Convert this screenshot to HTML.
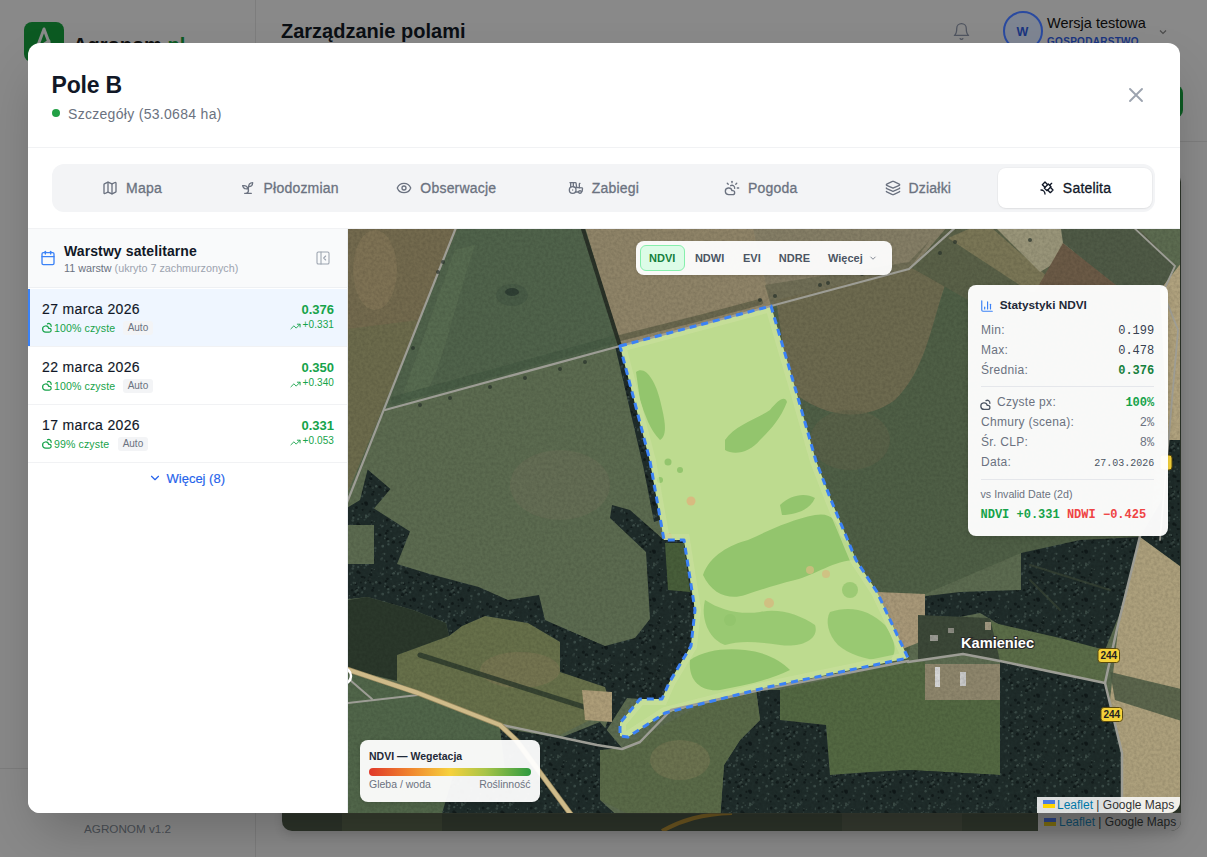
<!DOCTYPE html>
<html><head><meta charset="utf-8">
<style>
*{box-sizing:border-box;margin:0;padding:0;-webkit-font-smoothing:antialiased}
html,body{width:1207px;height:857px;overflow:hidden}
body{background:#898989;font-family:"Liberation Sans",sans-serif;position:relative}
.a{position:absolute;line-height:1;white-space:nowrap}
svg{position:absolute;overflow:visible}
</style></head><body>
<!-- ============ BACKGROUND PAGE (darkened) ============ -->
<div id="bg">
  <div class="a" style="left:255px;top:0;width:1px;height:857px;background:#7d7d7d"></div>
  <div class="a" style="left:0;top:768px;width:255px;height:1px;background:#7d7d7d"></div>
  <div class="a" style="left:256px;top:141px;width:951px;height:1px;background:#7d7d7d"></div>
  <!-- logo -->
  <div class="a" style="left:24px;top:22px;width:40px;height:40px;border-radius:8px;background:#0c5a22"></div>
  <svg style="left:24px;top:22px" width="40" height="40" viewBox="0 0 40 40" fill="none" stroke="#8a8a8a" stroke-width="3" stroke-linecap="round" stroke-linejoin="round"><path d="M10 34 L20 7 L30 34"/><path d="M14 26 L25 19"/></svg>
  <div class="a" style="left:73px;top:35px;font-size:20px;font-weight:bold;color:#101010">Agronom<span style="color:#0c5a22">.pl</span></div>
  <div class="a" style="left:84px;top:823px;font-size:11.7px;color:#4a4f55">AGRONOM v1.2</div>
  <div class="a" style="left:281px;top:21.4px;font-size:20px;font-weight:bold;color:#0b0f14">Zarządzanie polami</div>
  <!-- bell -->
  <svg style="left:952px;top:22px" width="19" height="19" viewBox="0 0 24 24" fill="none" stroke="#505560" stroke-width="1.6" stroke-linecap="round" stroke-linejoin="round"><path d="M6 8a6 6 0 0 1 12 0c0 7 3 9 3 9H3s3-2 3-9"/><path d="M10.3 21a1.94 1.94 0 0 0 3.4 0"/></svg>
  <!-- avatar -->
  <div class="a" style="left:1003px;top:11px;width:40px;height:40px;border-radius:50%;border:2px solid #2a4aa0;background:#7e8592"></div>
  <div class="a" style="left:1016.5px;top:25.5px;font-size:12.5px;font-weight:bold;color:#1a3580">W</div>
  <div class="a" style="left:1047px;top:16.4px;font-size:14.5px;color:#0b0b0b">Wersja testowa</div>
  <div class="a" style="left:1047px;top:36.5px;font-size:10px;font-weight:bold;letter-spacing:.3px;color:#1a3580">GOSPODARSTWO</div>
  <svg style="left:1157px;top:26px" width="12" height="12" viewBox="0 0 24 24" fill="none" stroke="#4a4a4a" stroke-width="2.2"><path d="m6 9 6 6 6-6"/></svg>
  <!-- green button -->
  <div class="a" style="left:1100px;top:85px;width:83px;height:33px;border-radius:8px;background:#0c5a22"></div>
  <!-- bg map -->
  <div class="a" style="left:282px;top:172px;width:899px;height:659px;border-radius:10px;background:#2c3329;overflow:hidden;box-shadow:0 4px 10px rgba(0,0,0,.12)">
    <svg style="left:0;top:0" width="899" height="659" viewBox="0 0 899 659"><path d="M380 659 C400 648 420 642 450 641" fill="none" stroke="#6a5420" stroke-width="4"/><path d="M0 641 H899" stroke="#3a4034" stroke-width="1"/><rect x="60" y="641" width="100" height="18" fill="#3c4232" opacity=".6"/><rect x="560" y="641" width="120" height="18" fill="#3a3e34" opacity=".6"/></svg><div class="a" style="left:756px;top:641px;width:143px;height:18px;background:#7a7a7a"></div>
    <div class="a" style="left:762px;top:646px;width:12px;height:4px;background:#2a4080"></div><div class="a" style="left:762px;top:650px;width:12px;height:4px;background:#7a6a10"></div><div class="a" style="left:777px;top:644px;font-size:12px;color:#1e2424"><span style="color:#114a66">Leaflet</span> | Google Maps</div>
  </div>
</div>

<!-- ============ MODAL ============ -->
<div id="modal" class="a" style="left:28px;top:43px;width:1152px;height:770px;background:#fff;border-radius:12px;overflow:hidden;box-shadow:0 25px 50px -12px rgba(0,0,0,.25)">
  <!-- header -->
  <div class="a" style="left:23.5px;top:30.8px;font-size:23px;font-weight:bold;color:#111827;letter-spacing:-.2px">Pole B</div>
  <div class="a" style="left:24px;top:66px;width:8px;height:8px;border-radius:50%;background:#22a045"></div>
  <div class="a" style="left:40px;top:63.5px;font-size:14px;color:#6b7280;letter-spacing:.3px">Szczegóły (53.0684 ha)</div>
  <svg style="left:1096px;top:40px" width="24" height="24" viewBox="0 0 24 24" fill="none" stroke="#9ca3af" stroke-width="1.9" stroke-linecap="round"><path d="M18 6 6 18M6 6l12 12"/></svg>
  <div class="a" style="left:0;top:104px;width:1152px;height:1px;background:#f1f2f4"></div>
  <!-- tabs -->
  <div class="a" style="left:24px;top:121px;width:1103px;height:48px;border-radius:12px;background:#f3f4f6"></div>
  <div id="tabs">
<div class="a" style="left:27.00px;top:125px;width:154px;height:40px;border-radius:8px;display:flex;align-items:center;justify-content:center;gap:8px;font-size:14px;letter-spacing:.2px;-webkit-text-stroke:.3px currentColor;color:#6b7280"><svg style="position:static" width="16" height="16" viewBox="0 0 24 24" fill="none" stroke="currentColor" stroke-width="2" stroke-linecap="round" stroke-linejoin="round"><path d="M14.106 5.553a2 2 0 0 0 1.788 0l3.659-1.83A1 1 0 0 1 21 4.619v12.764a1 1 0 0 1-.553.894l-4.553 2.277a2 2 0 0 1-1.788 0l-4.212-2.106a2 2 0 0 0-1.788 0l-3.659 1.83A1 1 0 0 1 3 19.381V6.618a1 1 0 0 1 .553-.894l4.553-2.277a2 2 0 0 1 1.788 0z"/><path d="M15 5.764v15"/><path d="M9 3.236v15"/></svg><span>Mapa</span></div>
<div class="a" style="left:184.17px;top:125px;width:154px;height:40px;border-radius:8px;display:flex;align-items:center;justify-content:center;gap:8px;font-size:14px;letter-spacing:.2px;-webkit-text-stroke:.3px currentColor;color:#6b7280"><svg style="position:static" width="16" height="16" viewBox="0 0 24 24" fill="none" stroke="currentColor" stroke-width="2" stroke-linecap="round" stroke-linejoin="round"><path d="M7 20h10"/><path d="M10 20c5.5-2.5.8-6.4 3-10"/><path d="M9.5 9.4c1.1.8 1.8 2.2 2.3 3.7-2 .4-3.5.4-4.8-.3-1.2-.6-2.3-1.9-3-4.2 2.8-.5 4.4 0 5.5.8z"/><path d="M14.1 6a7 7 0 0 0-1.1 4c1.9-.1 3.3-.6 4.3-1.4 1-1 1.6-2.3 1.7-4.6-2.7.1-4 1-4.9 2z"/></svg><span>Płodozmian</span></div>
<div class="a" style="left:341.34px;top:125px;width:154px;height:40px;border-radius:8px;display:flex;align-items:center;justify-content:center;gap:8px;font-size:14px;letter-spacing:.2px;-webkit-text-stroke:.3px currentColor;color:#6b7280"><svg style="position:static" width="16" height="16" viewBox="0 0 24 24" fill="none" stroke="currentColor" stroke-width="2" stroke-linecap="round" stroke-linejoin="round"><path d="M2.062 12.348a1 1 0 0 1 0-.696 10.75 10.75 0 0 1 19.876 0 1 1 0 0 1 0 .696 10.75 10.75 0 0 1-19.876 0"/><circle cx="12" cy="12" r="3"/></svg><span>Obserwacje</span></div>
<div class="a" style="left:498.51px;top:125px;width:154px;height:40px;border-radius:8px;display:flex;align-items:center;justify-content:center;gap:8px;font-size:14px;letter-spacing:.2px;-webkit-text-stroke:.3px currentColor;color:#6b7280"><svg style="position:static" width="16" height="16" viewBox="0 0 24 24" fill="none" stroke="currentColor" stroke-width="2" stroke-linecap="round" stroke-linejoin="round"><path d="m10 11 11 .9a1 1 0 0 1 .8 1.1l-.665 4.158a1 1 0 0 1-.988.842H20"/><path d="M16 18h-5"/><path d="M18 5a1 1 0 0 0-1 1v5.573"/><path d="M3 4h8.129a1 1 0 0 1 .99.863L13 11.246"/><path d="M4 11V4"/><path d="M7 15h.01"/><path d="M8 10.1V4"/><circle cx="18" cy="18" r="2"/><circle cx="7" cy="15" r="5"/></svg><span>Zabiegi</span></div>
<div class="a" style="left:655.68px;top:125px;width:154px;height:40px;border-radius:8px;display:flex;align-items:center;justify-content:center;gap:8px;font-size:14px;letter-spacing:.2px;-webkit-text-stroke:.3px currentColor;color:#6b7280"><svg style="position:static" width="16" height="16" viewBox="0 0 24 24" fill="none" stroke="currentColor" stroke-width="2" stroke-linecap="round" stroke-linejoin="round"><path d="M12 2v2"/><path d="m4.93 4.93 1.41 1.41"/><path d="M20 12h2"/><path d="m19.07 4.93-1.41 1.41"/><path d="M15.947 12.65a4 4 0 0 0-5.925-4.128"/><path d="M13 22H7a5 5 0 1 1 4.9-6H13a3 3 0 0 1 0 6Z"/></svg><span>Pogoda</span></div>
<div class="a" style="left:812.85px;top:125px;width:154px;height:40px;border-radius:8px;display:flex;align-items:center;justify-content:center;gap:8px;font-size:14px;letter-spacing:.2px;-webkit-text-stroke:.3px currentColor;color:#6b7280"><svg style="position:static" width="16" height="16" viewBox="0 0 24 24" fill="none" stroke="currentColor" stroke-width="2" stroke-linecap="round" stroke-linejoin="round"><path d="M12.83 2.18a2 2 0 0 0-1.66 0L2.6 6.08a1 1 0 0 0 0 1.83l8.58 3.91a2 2 0 0 0 1.66 0l8.58-3.9a1 1 0 0 0 0-1.83z"/><path d="M2 12a1 1 0 0 0 .58.91l8.6 3.91a2 2 0 0 0 1.65 0l8.58-3.9A1 1 0 0 0 22 12"/><path d="M2 17a1 1 0 0 0 .58.91l8.6 3.91a2 2 0 0 0 1.65 0l8.58-3.9A1 1 0 0 0 22 17"/></svg><span>Działki</span></div>
<div class="a" style="left:970.02px;top:125px;width:154px;height:40px;border-radius:8px;display:flex;align-items:center;justify-content:center;gap:8px;font-size:14px;letter-spacing:.2px;-webkit-text-stroke:.3px currentColor;color:#111827;background:#fff;box-shadow:0 1px 2px rgba(0,0,0,.06),0 0 0 1px rgba(0,0,0,.025)"><svg style="position:static" width="16" height="16" viewBox="0 0 24 24" fill="none" stroke="currentColor" stroke-width="2" stroke-linecap="round" stroke-linejoin="round"><path d="M13 7 9 3 5 7l4 4"/><path d="m17 11 4 4-4 4-4-4"/><path d="m8 12 4 4 6-6-4-4Z"/><path d="m16 8 3-3"/><path d="M9 21a6 6 0 0 0-6-6"/></svg><span>Satelita</span></div>
</div>
  <!-- content border -->
  <div class="a" style="left:0;top:185px;width:1152px;height:1px;background:#f1f2f4"></div>
  <!-- left panel -->
  <div id="panel" class="a" style="left:0;top:186px;width:320px;height:584px;background:#fff;border-right:1px solid #eceef1"></div>
<div class="a" style="left:-28px;top:-43px;width:1207px;height:857px">
<div class="a" style="left:28px;top:229px;width:319px;height:59px;background:#f9fafb;border-bottom:1px solid #eef0f3"></div>
<svg style="left:40px;top:250px" width="16" height="16" viewBox="0 0 24 24" fill="none" stroke="#3b82f6" stroke-width="2" stroke-linecap="round" stroke-linejoin="round"><rect width="18" height="18" x="3" y="4" rx="2"/><path d="M16 2v4"/><path d="M8 2v4"/><path d="M3 10h18"/></svg>
<div class="a" style="left:64px;top:244.2px;font-size:14px;font-weight:bold;color:#111827;letter-spacing:.1px">Warstwy satelitarne</div>
<div class="a" style="left:64px;top:262.9px;font-size:10.75px;color:#6b7280">11 warstw <span style="color:#9ca3af">(ukryto 7 zachmurzonych)</span></div>
<svg style="left:315px;top:250px" width="16" height="16" viewBox="0 0 24 24" fill="none" stroke="#9ca3af" stroke-width="1.6" stroke-linecap="round" stroke-linejoin="round"><rect width="18" height="18" x="3" y="3" rx="2"/><path d="M9 3v18"/><path d="m16 15-3-3 3-3"/></svg>
<div class="a" style="left:28px;top:289px;width:319px;height:58px;background:#eff6ff;border-bottom:1px solid #f1f2f4"></div>
<div class="a" style="left:28px;top:289px;width:2px;height:57px;background:#3b82f6"></div>
<div class="a" style="left:42px;top:302.05px;font-size:14px;letter-spacing:.35px;-webkit-text-stroke:.15px #111827;color:#111827">27 marca 2026</div>
<svg style="left:41.5px;top:322.3px" width="11" height="11" viewBox="1 6 18 17" fill="none" stroke="#16a34a" stroke-width="2" stroke-linecap="round" stroke-linejoin="round"><path d="M15.947 12.65a4 4 0 0 0-5.925-4.128"/><path d="M13 22H7a5 5 0 1 1 4.9-6H13a3 3 0 0 1 0 6Z"/></svg>
<div class="a" style="left:54px;top:322.80px;font-size:10.6px;color:#16a34a;letter-spacing:.1px">100% czyste</div>
<div class="a" style="left:123.2px;top:321.20px;width:29.5px;height:14px;border-radius:3px;background:#f3f4f6;font-size:10px;color:#6b7280;line-height:14px;text-align:center">Auto</div>
<div class="a" style="right:873px;top:302.70px;font-size:13px;font-weight:bold;color:#16a34a">0.376</div>
<div class="a" style="right:873px;top:320.40px;font-size:10px;color:#16a34a;letter-spacing:.1px">+0.331</div>
<svg style="left:289.5px;top:320.5px" width="11" height="11" viewBox="0 0 24 24" fill="none" stroke="#16a34a" stroke-width="2" stroke-linecap="round" stroke-linejoin="round"><polyline points="22 7 13.5 15.5 8.5 10.5 2 17"/><polyline points="16 7 22 7 22 13"/></svg>
<div class="a" style="left:28px;top:347px;width:319px;height:58px;background:#fff;border-bottom:1px solid #f1f2f4"></div>
<div class="a" style="left:42px;top:360.05px;font-size:14px;letter-spacing:.35px;-webkit-text-stroke:.15px #111827;color:#111827">22 marca 2026</div>
<svg style="left:41.5px;top:380.3px" width="11" height="11" viewBox="1 6 18 17" fill="none" stroke="#16a34a" stroke-width="2" stroke-linecap="round" stroke-linejoin="round"><path d="M15.947 12.65a4 4 0 0 0-5.925-4.128"/><path d="M13 22H7a5 5 0 1 1 4.9-6H13a3 3 0 0 1 0 6Z"/></svg>
<div class="a" style="left:54px;top:380.80px;font-size:10.6px;color:#16a34a;letter-spacing:.1px">100% czyste</div>
<div class="a" style="left:123.2px;top:379.20px;width:29.5px;height:14px;border-radius:3px;background:#f3f4f6;font-size:10px;color:#6b7280;line-height:14px;text-align:center">Auto</div>
<div class="a" style="right:873px;top:360.70px;font-size:13px;font-weight:bold;color:#16a34a">0.350</div>
<div class="a" style="right:873px;top:378.40px;font-size:10px;color:#16a34a;letter-spacing:.1px">+0.340</div>
<svg style="left:289.5px;top:378.5px" width="11" height="11" viewBox="0 0 24 24" fill="none" stroke="#16a34a" stroke-width="2" stroke-linecap="round" stroke-linejoin="round"><polyline points="22 7 13.5 15.5 8.5 10.5 2 17"/><polyline points="16 7 22 7 22 13"/></svg>
<div class="a" style="left:28px;top:405px;width:319px;height:58px;background:#fff;border-bottom:1px solid #f1f2f4"></div>
<div class="a" style="left:42px;top:418.05px;font-size:14px;letter-spacing:.35px;-webkit-text-stroke:.15px #111827;color:#111827">17 marca 2026</div>
<svg style="left:41.5px;top:438.3px" width="11" height="11" viewBox="1 6 18 17" fill="none" stroke="#16a34a" stroke-width="2" stroke-linecap="round" stroke-linejoin="round"><path d="M15.947 12.65a4 4 0 0 0-5.925-4.128"/><path d="M13 22H7a5 5 0 1 1 4.9-6H13a3 3 0 0 1 0 6Z"/></svg>
<div class="a" style="left:54px;top:438.80px;font-size:10.6px;color:#16a34a;letter-spacing:.1px">99% czyste</div>
<div class="a" style="left:118.2px;top:437.20px;width:29.5px;height:14px;border-radius:3px;background:#f3f4f6;font-size:10px;color:#6b7280;line-height:14px;text-align:center">Auto</div>
<div class="a" style="right:873px;top:418.70px;font-size:13px;font-weight:bold;color:#16a34a">0.331</div>
<div class="a" style="right:873px;top:436.40px;font-size:10px;color:#16a34a;letter-spacing:.1px">+0.053</div>
<svg style="left:289.5px;top:436.5px" width="11" height="11" viewBox="0 0 24 24" fill="none" stroke="#16a34a" stroke-width="2" stroke-linecap="round" stroke-linejoin="round"><polyline points="22 7 13.5 15.5 8.5 10.5 2 17"/><polyline points="16 7 22 7 22 13"/></svg>
<svg style="left:147.6px;top:471.3px" width="14" height="14" viewBox="0 0 24 24" fill="none" stroke="#2563eb" stroke-width="2" stroke-linecap="round" stroke-linejoin="round"><path d="m6 9 6 6 6-6"/></svg>
<div class="a" style="left:166.5px;top:472px;font-size:13px;color:#2563eb;-webkit-text-stroke:.15px #2563eb">Więcej (8)</div>
</div>
  <!-- map -->
  <div id="map" class="a" style="left:320px;top:186px;width:832px;height:584px;background:#5a6444;overflow:hidden">
<svg style="left:0;top:0" width="832" height="584" viewBox="348 229 832 584"><defs><pattern id="fp" patternUnits="userSpaceOnUse" width="48" height="48"><rect width="48" height="48" fill="#1f2c2a"/><circle cx="37.5" cy="11.8" r="1.1" fill="#0f1818" opacity=".8"/><circle cx="7.4" cy="47.5" r="1.1" fill="#0f1818" opacity=".8"/><circle cx="29.2" cy="22.8" r="1.4" fill="#0f1818" opacity=".8"/><circle cx="29.0" cy="35.7" r="0.9" fill="#0f1818" opacity=".8"/><circle cx="36.5" cy="14.4" r="1.3" fill="#0f1818" opacity=".8"/><circle cx="16.1" cy="14.2" r="1.3" fill="#0f1818" opacity=".8"/><circle cx="22.3" cy="17.3" r="1.5" fill="#0f1818" opacity=".8"/><circle cx="28.4" cy="1.7" r="1.1" fill="#0f1818" opacity=".8"/><circle cx="21.9" cy="44.0" r="1.7" fill="#0f1818" opacity=".8"/><circle cx="26.2" cy="0.7" r="1.6" fill="#0f1818" opacity=".8"/><circle cx="20.5" cy="27.6" r="1.5" fill="#0f1818" opacity=".8"/><circle cx="30.3" cy="23.1" r="1.7" fill="#0f1818" opacity=".8"/><circle cx="18.5" cy="18.8" r="1.7" fill="#0f1818" opacity=".8"/><circle cx="9.4" cy="14.2" r="1.6" fill="#0f1818" opacity=".8"/><circle cx="3.2" cy="40.1" r="1.5" fill="#0f1818" opacity=".8"/><circle cx="20.8" cy="13.7" r="1.6" fill="#0f1818" opacity=".8"/><circle cx="43.7" cy="6.8" r="1.3" fill="#0f1818" opacity=".8"/><circle cx="26.4" cy="23.9" r="1.1" fill="#0f1818" opacity=".8"/><circle cx="7.4" cy="28.1" r="1.6" fill="#0f1818" opacity=".8"/><circle cx="3.3" cy="11.0" r="1.6" fill="#0f1818" opacity=".8"/><circle cx="38.0" cy="31.9" r="0.8" fill="#0f1818" opacity=".8"/><circle cx="34.7" cy="47.0" r="1.8" fill="#0f1818" opacity=".8"/><circle cx="33.7" cy="2.3" r="1.6" fill="#0f1818" opacity=".8"/><circle cx="10.5" cy="31.0" r="1.8" fill="#0f1818" opacity=".8"/><circle cx="34.2" cy="6.5" r="1.1" fill="#0f1818" opacity=".8"/><circle cx="44.1" cy="7.2" r="1.4" fill="#0f1818" opacity=".8"/><circle cx="19.9" cy="7.7" r="1.4" fill="#0f1818" opacity=".8"/><circle cx="2.1" cy="5.2" r="1.2" fill="#0f1818" opacity=".8"/><circle cx="3.5" cy="2.8" r="1.4" fill="#0f1818" opacity=".8"/><circle cx="35.6" cy="42.2" r="0.9" fill="#0f1818" opacity=".8"/><circle cx="20.7" cy="15.1" r="1.4" fill="#0f1818" opacity=".8"/><circle cx="23.5" cy="45.0" r="1.2" fill="#0f1818" opacity=".8"/><circle cx="2.7" cy="33.5" r="1.0" fill="#0f1818" opacity=".8"/><circle cx="30.3" cy="24.3" r="1.7" fill="#0f1818" opacity=".8"/><circle cx="26.6" cy="29.8" r="1.1" fill="#0f1818" opacity=".8"/><circle cx="26.5" cy="12.2" r="1.6" fill="#0f1818" opacity=".8"/><circle cx="24.8" cy="6.4" r="1.0" fill="#0f1818" opacity=".8"/><circle cx="17.8" cy="35.4" r="1.0" fill="#0f1818" opacity=".8"/><circle cx="34.2" cy="31.4" r="0.9" fill="#0f1818" opacity=".8"/><circle cx="32.1" cy="4.4" r="0.9" fill="#0f1818" opacity=".8"/><circle cx="29.9" cy="35.6" r="1.2" fill="#3f504b" opacity="0.87"/><circle cx="35.5" cy="44.3" r="0.6" fill="#3f504b" opacity="0.63"/><circle cx="45.3" cy="31.2" r="1.3" fill="#3f504b" opacity="0.46"/><circle cx="22.5" cy="11.8" r="1.0" fill="#3f504b" opacity="0.69"/><circle cx="0.6" cy="10.4" r="0.8" fill="#3f504b" opacity="0.86"/><circle cx="36.8" cy="7.7" r="1.2" fill="#3f504b" opacity="0.47"/><circle cx="29.6" cy="6.1" r="0.6" fill="#3f504b" opacity="0.84"/><circle cx="10.1" cy="10.3" r="1.4" fill="#3f504b" opacity="0.84"/><circle cx="13.9" cy="46.2" r="1.0" fill="#3f504b" opacity="0.74"/><circle cx="9.8" cy="45.2" r="1.2" fill="#3f504b" opacity="0.88"/><circle cx="42.9" cy="14.3" r="0.9" fill="#3f504b" opacity="0.48"/><circle cx="7.0" cy="3.1" r="0.8" fill="#3f504b" opacity="0.70"/><circle cx="0.2" cy="32.5" r="0.9" fill="#3f504b" opacity="0.55"/><circle cx="39.3" cy="23.1" r="0.9" fill="#3f504b" opacity="0.64"/><circle cx="33.8" cy="2.7" r="1.4" fill="#3f504b" opacity="0.41"/><circle cx="36.0" cy="40.6" r="0.6" fill="#3f504b" opacity="0.79"/><circle cx="17.6" cy="27.8" r="0.6" fill="#3f504b" opacity="0.42"/><circle cx="8.7" cy="45.8" r="0.8" fill="#3f504b" opacity="0.78"/><circle cx="44.6" cy="45.2" r="0.9" fill="#3f504b" opacity="0.58"/><circle cx="25.2" cy="37.2" r="0.7" fill="#3f504b" opacity="0.77"/><circle cx="38.3" cy="41.3" r="0.6" fill="#3f504b" opacity="0.87"/><circle cx="4.4" cy="16.4" r="1.1" fill="#3f504b" opacity="0.86"/><circle cx="16.3" cy="44.4" r="1.0" fill="#3f504b" opacity="0.56"/><circle cx="15.2" cy="8.5" r="0.7" fill="#3f504b" opacity="0.47"/><circle cx="33.1" cy="47.8" r="0.7" fill="#3f504b" opacity="0.42"/><circle cx="47.4" cy="25.6" r="0.9" fill="#3f504b" opacity="0.52"/><circle cx="28.5" cy="39.7" r="1.0" fill="#3f504b" opacity="0.61"/><circle cx="2.7" cy="44.0" r="0.6" fill="#3f504b" opacity="0.65"/><circle cx="40.2" cy="6.3" r="1.2" fill="#3f504b" opacity="0.87"/><circle cx="30.3" cy="37.8" r="0.7" fill="#3f504b" opacity="0.62"/><circle cx="7.2" cy="40.5" r="0.8" fill="#3f504b" opacity="0.63"/><circle cx="48.0" cy="40.9" r="1.4" fill="#3f504b" opacity="0.63"/><circle cx="23.4" cy="35.0" r="1.0" fill="#3f504b" opacity="0.55"/><circle cx="19.4" cy="7.0" r="0.9" fill="#3f504b" opacity="0.89"/><circle cx="46.1" cy="30.1" r="1.0" fill="#3f504b" opacity="0.57"/><circle cx="4.3" cy="13.1" r="1.2" fill="#3f504b" opacity="0.83"/><circle cx="17.3" cy="37.7" r="1.2" fill="#3f504b" opacity="0.75"/><circle cx="31.9" cy="36.5" r="0.9" fill="#3f504b" opacity="0.75"/><circle cx="13.5" cy="23.3" r="1.2" fill="#3f504b" opacity="0.75"/><circle cx="14.1" cy="45.4" r="1.1" fill="#3f504b" opacity="0.69"/><circle cx="0.6" cy="26.3" r="0.8" fill="#3f504b" opacity="0.74"/><circle cx="22.2" cy="39.2" r="1.1" fill="#3f504b" opacity="0.80"/><circle cx="16.7" cy="30.9" r="1.2" fill="#3f504b" opacity="0.81"/><circle cx="16.8" cy="40.5" r="1.3" fill="#3f504b" opacity="0.74"/><circle cx="46.9" cy="45.9" r="1.0" fill="#3f504b" opacity="0.66"/><circle cx="8.0" cy="40.2" r="1.3" fill="#3f504b" opacity="0.64"/><circle cx="33.2" cy="34.5" r="1.2" fill="#3f504b" opacity="0.49"/><circle cx="37.5" cy="27.9" r="1.1" fill="#3f504b" opacity="0.61"/><circle cx="29.9" cy="37.2" r="1.1" fill="#3f504b" opacity="0.76"/><circle cx="1.3" cy="7.7" r="1.0" fill="#3f504b" opacity="0.73"/><circle cx="10.5" cy="32.9" r="1.1" fill="#3f504b" opacity="0.42"/><circle cx="22.6" cy="10.9" r="0.6" fill="#3f504b" opacity="0.47"/><circle cx="15.2" cy="8.7" r="0.8" fill="#3f504b" opacity="0.42"/><circle cx="22.3" cy="18.3" r="1.1" fill="#3f504b" opacity="0.70"/><circle cx="11.4" cy="43.4" r="0.6" fill="#3f504b" opacity="0.60"/><circle cx="13.4" cy="19.7" r="0.7" fill="#3f504b" opacity="0.82"/><circle cx="17.9" cy="1.7" r="1.1" fill="#3f504b" opacity="0.45"/><circle cx="26.2" cy="16.3" r="1.1" fill="#3f504b" opacity="0.88"/><circle cx="39.3" cy="20.1" r="1.3" fill="#3f504b" opacity="0.72"/><circle cx="17.7" cy="6.8" r="1.1" fill="#3f504b" opacity="0.68"/><circle cx="45.9" cy="46.5" r="1.1" fill="#3f504b" opacity="0.58"/><circle cx="42.9" cy="0.0" r="0.7" fill="#3f504b" opacity="0.68"/><circle cx="29.5" cy="6.8" r="1.1" fill="#3f504b" opacity="0.85"/><circle cx="18.0" cy="20.7" r="0.8" fill="#3f504b" opacity="0.55"/><circle cx="46.7" cy="18.2" r="1.4" fill="#3f504b" opacity="0.86"/><circle cx="28.6" cy="12.5" r="1.4" fill="#3f504b" opacity="0.65"/><circle cx="19.9" cy="15.3" r="1.4" fill="#3f504b" opacity="0.65"/><circle cx="13.7" cy="22.9" r="0.7" fill="#3f504b" opacity="0.71"/><circle cx="21.3" cy="14.1" r="1.2" fill="#3f504b" opacity="0.81"/><circle cx="0.6" cy="25.6" r="0.8" fill="#3f504b" opacity="0.87"/></pattern><filter id="tex" x="0" y="0" width="100%" height="100%"><feTurbulence type="fractalNoise" baseFrequency="0.35" numOctaves="2" seed="3"/><feColorMatrix type="matrix" values="0 0 0 0 0  0 0 0 0 0  0 0 0 0 0  0 0 0 -1.1 0.75"/></filter><filter id="tex2" x="0" y="0" width="100%" height="100%"><feTurbulence type="fractalNoise" baseFrequency="0.04" numOctaves="3" seed="7"/><feColorMatrix type="matrix" values="0 0 0 0 1  0 0 0 0 0.95  0 0 0 0 0.8  0 0 0 -0.9 0.55"/></filter></defs><rect x="340" y="220" width="850" height="600" fill="#5c6b50"/><polygon points="340,220 461,220 342,505 340,505" fill="#736a4e" /><polygon points="340,330 418,320 380,420 342,505 340,505" fill="#6a6b4c" opacity='.8'/><ellipse cx="375" cy="270" rx="22" ry="40" fill="#857858" opacity=".6"/><polygon points="457,229 583,229 620,346 385,410 346,498" fill="#50634b" /><path d="M455 250 L475 245 C450 320 440 380 420 400 L400 402Z" fill="#6a7d5c" opacity=".3"/><ellipse cx="512" cy="292" rx="7" ry="4" fill="#1f2a26"/><ellipse cx="512" cy="295" rx="16" ry="11" fill="#3f5442" opacity=".5"/><polyline points="395,400 620,338" fill="none" stroke="#3f5540" stroke-width="8" stroke-linejoin="round" stroke-linecap="round" opacity='.5'/><polygon points="346,498 385,410 620,346 650,461 660,560 650,640 604,646 545,620 538,593 509,599 439,584 396,566 409,532 374,511 390,490 373,469 346,510" fill="#5c6b50" /><ellipse cx="560" cy="485" rx="50" ry="35" fill="#6e7258" opacity=".45"/><polygon points="583,220 960,220 909,269 771,306 620,346" fill="#8f8468" /><polygon points="751,220 960,220 909,269 771,306" fill="#857e66" /><polygon points="765,285 909,262 930,240 909,269 771,306" fill="#6a6a52" opacity='.8'/><polyline points="620,338 700,318 760,302" fill="none" stroke="#4a5038" stroke-width="6" stroke-linejoin="round" stroke-linecap="round" opacity='.55'/><polyline points="583,229 620,346" fill="none" stroke="#2a3228" stroke-width="4" stroke-linejoin="round" stroke-linecap="round" /><polygon points="771,306 912,268 968,285 1168,285 1150,540 1021,553 918,597 908,660 768,687 700,600 700,400" fill="#4f5f46" /><path d="M776 300 L912 268 L945 285 C930 330 925 370 895 400 C860 425 820 415 790 390Z" fill="#6f6a50" opacity=".95"/><ellipse cx="850" cy="440" rx="40" ry="30" fill="#5f634a" opacity=".6"/><polygon points="953,220 1131,220 1175,266 1160,300 968,300 912,268" fill="#5a6148" /><polygon points="948,238 985,222 1065,292 1030,292" fill="#7a7656" /><polygon points="990,222 1060,222 1085,245 1040,272" fill="#999579" /><polygon points="1035,292 1063,243 1125,292" fill="#6b5a46" /><polygon points="1063,243 1060,222 1131,222 1175,266 1160,292 1125,292" fill="#4f5a46" /><polygon points="1160,290 1185,258 1185,445 1168,445" fill="#b0a27e" /><polygon points="1168,440 1185,440 1185,570 1140,537 1162,500" fill="url(#fp)" /><polygon points="1021,553 1080,540 1140,537 1120,613 1105,650 1060,640 1000,625 980,613 920,625 918,597 960,592 1021,590" fill="url(#fp)" /><polyline points="1030,565 1110,590" fill="none" stroke="#3a4636" stroke-width="2" stroke-linejoin="round" stroke-linecap="round" opacity='.7'/><polyline points="1030,580 1060,610" fill="none" stroke="#3a4636" stroke-width="2" stroke-linejoin="round" stroke-linecap="round" opacity='.7'/><polygon points="877,592 925,594 925,640 900,650 895,630" fill="#a89878" /><polygon points="990,622 1060,638 1105,650 1105,683 1000,661" fill="#5b6d48" /><polygon points="1120,613 1140,537 1185,570 1185,820 1122,820 1110,700" fill="#ada07c" /><polygon points="1110,672 1185,690 1185,722 1115,700" fill="#4c5a44" opacity='.85'/><polygon points="1000,661 1105,683 1122,753 1122,820 890,820 900,760 1000,775" fill="url(#fp)" /><polygon points="918,615 990,618 1000,661 963,654 918,660" fill="#3c4838" /><rect x="930" y="635" width="8" height="6" fill="#9a9a92"/><rect x="948" y="628" width="6" height="5" fill="#8a8a80"/><rect x="985" y="622" width="6" height="8" fill="#a09880"/><polygon points="925,664 1000,664 1000,700 925,700" fill="#8e866c" /><rect x="935" y="667" width="5" height="20" fill="#d8d8d8"/><rect x="960" y="672" width="6" height="14" fill="#c8c8c8"/><polygon points="780,690 908,662 925,662 925,700 1000,700 1000,775 908,770 870,772 830,775 826,725 780,720" fill="#536842" /><polygon points="756,690 780,690 780,720 826,725 830,775 870,772 908,770 1000,775 900,820 720,820 724,765 740,740 760,720" fill="url(#fp)" /><polygon points="622,748 700,705 756,690 760,720 740,740 724,765 720,820 640,820 600,800 600,750" fill="#5a6a48" /><ellipse cx="680" cy="760" rx="30" ry="20" fill="#7b7a55" opacity=".5"/><polygon points="397,655 449,636 462,626 485,616 528,623 567,646 604,672 607,690 590,720 560,735 502,725 418,693 397,681" fill="#67704a" /><ellipse cx="520" cy="670" rx="40" ry="18" fill="#857a58" opacity=".45"/><polygon points="340,667 418,693 502,725 516,740 575,820 340,820" fill="#51664a" /><polygon points="348,600 367.6,597 413,610 446,623 449,636 397,655 397,681 340,667 340,600" fill="#2b382b" /><polygon points="367.6,469.4 390.5,489 374,508.6 410,531.5 397,564 429.7,574 478.7,587 508,600 539,595 545,620 604,646 605,687 567,646 528,623 485,616 462,626 449,636 446,623 413,610 367.6,597 340,600 340,564 374,564 374,525 340,525 340,512 360,500" fill="url(#fp)" /><polyline points="420,655 600,712" fill="none" stroke="#2b382b" stroke-width="5" stroke-linejoin="round" stroke-linecap="round" opacity='.8'/><polygon points="615,346 622,346 652,470 660,520 654,522 644,470" fill="url(#fp)" /><polygon points="612,505 630,510 664,540 684,540 695,610 691,646 669,683 662,699 640,699 627,698 601,739 612,709 605,687 560,672 560,627 605,646 635,638 650,619 646,552 610,518" fill="url(#fp)" /><polygon points="665,543 684,543 690,592 668,590" fill="#485e3a" /><polygon points="500,728 560,738 600,722 622,748 600,750 600,800 622,820 520,820 505,770" fill="url(#fp)" /><polygon points="455,770 515,768 540,820 440,820" fill="url(#fp)" /><polygon points="582,690 612,692 612,722 585,720" fill="#ad9d78" /><polygon points="620,346 771,306 796,391 816,461 831,500 856,560 877,592 908,658 768,687 665,713 628,737 620,736 620,723 640,699 662,699 669,683 691,646 695,610 684,540 664,540 650,461" fill="#bddb8f" /><clipPath id="ndc"><polygon points="620,346 771,306 796,391 816,461 831,500 856,560 877,592 908,658 768,687 665,713 628,737 620,736 620,723 640,699 662,699 669,683 691,646 695,610 684,540 664,540 650,461" fill="#000" /></clipPath><g clip-path="url(#ndc)"><path d="M636 372 C645 365 655 380 660 400 C665 420 668 435 660 440 C650 430 645 415 640 400Z" fill="#93c56d"/><path d="M725 440 C735 425 755 420 770 410 C778 400 785 395 787 402 C780 420 770 430 760 440 C750 452 735 456 725 450Z" fill="#93c56d"/><circle cx="668" cy="462" r="3.5" fill="#93c56d"/><circle cx="680" cy="470" r="3" fill="#93c56d"/><circle cx="660" cy="480" r="3" fill="#93c56d"/><path d="M703 575 C710 555 730 545 748 540 C770 530 790 520 815 515 C830 512 838 520 840 535 C850 545 860 550 855 560 C835 560 815 575 795 580 C775 585 760 590 745 595 C730 600 712 595 703 575Z" fill="#93c56d"/><path d="M705 600 C720 610 740 615 760 612 C780 608 800 615 815 625 C820 640 800 648 780 645 C760 642 740 640 725 645 C710 640 700 620 705 600Z" fill="#93c56d" opacity=".85"/><path d="M690 660 C705 650 725 648 745 650 C765 652 780 660 790 670 C770 680 745 685 720 690 C700 692 688 680 690 660Z" fill="#93c56d"/><path d="M830 612 C850 605 870 610 885 625 C895 640 898 652 890 660 C870 662 850 655 838 645 C828 635 825 620 830 612Z" fill="#93c56d" opacity=".85"/><path d="M780 505 C790 495 805 492 815 498 C810 510 795 515 782 515Z" fill="#93c56d"/><circle cx="850" cy="590" r="8" fill="#93c56d" opacity=".8"/><circle cx="730" cy="620" r="6" fill="#93c56d"/><circle cx="691" cy="501" r="4.5" fill="#d8bb80"/><circle cx="769" cy="603" r="5" fill="#d3bb80" opacity=".85"/><circle cx="810" cy="570" r="4" fill="#d3bb80" opacity=".8"/><circle cx="826" cy="574" r="4" fill="#d3bb80" opacity=".8"/><circle cx="668" cy="537" r="4" fill="#d6bb82"/><polygon points="620,346 771,306 796,391 816,461 831,500 856,560 877,592 908,658 768,687 665,713 628,737 620,736 620,723 640,699 662,699 669,683 691,646 695,610 684,540 664,540 650,461" fill="none" stroke='#c9e09b' stroke-width='12' opacity='.7'/></g><mask id="nomask"><rect x="340" y="220" width="850" height="600" fill="#fff"/><polygon points="620,346 771,306 796,391 816,461 831,500 856,560 877,592 908,658 768,687 665,713 628,737 620,736 620,723 640,699 662,699 669,683 691,646 695,610 684,540 664,540 650,461" fill="#000" /></mask><rect x="348" y="229" width="832" height="584" filter="url(#tex)" opacity=".18" mask="url(#nomask)"/><polyline points="457,225 346,505" fill="none" stroke="#9d9d95" stroke-width="2.2" stroke-linejoin="round" stroke-linecap="round" /><polyline points="385,410 620,346 771,306 909,269 958,225" fill="none" stroke="#9d9d95" stroke-width="2.2" stroke-linejoin="round" stroke-linecap="round" /><polyline points="1131,225 1175,266 1163,292 1178,330 1160,540" fill="none" stroke="#9d9d95" stroke-width="1.8" stroke-linejoin="round" stroke-linecap="round" /><polyline points="1140,536 1117,629 1105,683 1122,753 1122,820" fill="none" stroke="#9d9d95" stroke-width="2.5" stroke-linejoin="round" stroke-linecap="round" /><polyline points="908,662 963,654 1000,661 1105,683" fill="none" stroke="#9d9d95" stroke-width="2.5" stroke-linejoin="round" stroke-linecap="round" /><polyline points="502,725 597,745 622,749 640,742 671,710 760,690 908,661" fill="none" stroke="#9d9d95" stroke-width="2.5" stroke-linejoin="round" stroke-linecap="round" /><polyline points="340,704 418,695" fill="none" stroke="#9d9d95" stroke-width="2" stroke-linejoin="round" stroke-linecap="round" /><polyline points="340,667 418,693 500,725 516,740 575,820" fill="none" stroke="#9a8a60" stroke-width="5.5" stroke-linejoin="round" stroke-linecap="round" /><polyline points="340,667 418,693 500,725 516,740 575,820" fill="none" stroke="#cfbb8a" stroke-width="4" stroke-linejoin="round" stroke-linecap="round" /><polyline points="350,680 372,699" fill="none" stroke="#9d9d95" stroke-width="2" stroke-linejoin="round" stroke-linecap="round" /><circle cx="443" cy="262" r="2" fill="#26302a" opacity=".7"/><circle cx="438" cy="272" r="2" fill="#26302a" opacity=".7"/><circle cx="413" cy="348" r="2" fill="#26302a" opacity=".7"/><circle cx="420" cy="405" r="2" fill="#26302a" opacity=".7"/><circle cx="450" cy="398" r="2" fill="#26302a" opacity=".7"/><circle cx="490" cy="387" r="2" fill="#26302a" opacity=".7"/><circle cx="525" cy="378" r="2" fill="#26302a" opacity=".7"/><circle cx="560" cy="369" r="2" fill="#26302a" opacity=".7"/><circle cx="585" cy="362" r="2" fill="#26302a" opacity=".7"/><circle cx="760" cy="300" r="2" fill="#26302a" opacity=".7"/><circle cx="775" cy="296" r="2" fill="#26302a" opacity=".7"/><circle cx="820" cy="285" r="2" fill="#26302a" opacity=".7"/><circle cx="828" cy="283" r="2" fill="#26302a" opacity=".7"/><circle cx="862" cy="274" r="2" fill="#26302a" opacity=".7"/><circle cx="940" cy="253" r="2" fill="#26302a" opacity=".7"/><circle cx="955" cy="242" r="2" fill="#26302a" opacity=".7"/><circle cx="1030" cy="240" r="2" fill="#26302a" opacity=".7"/><polygon points="620,346 771,306 796,391 816,461 831,500 856,560 877,592 908,658 768,687 665,713 628,737 620,736 620,723 640,699 662,699 669,683 691,646 695,610 684,540 664,540 650,461" fill="none" stroke='#3b82f6' stroke-width='3' stroke-dasharray='7 5' stroke-linejoin='round'/><circle cx="343" cy="676" r="8" fill="none" stroke="#fff" stroke-width="2.5"/><text x="961" y="647.5" font-family="Liberation Sans" font-size="14.6" font-weight="bold" fill="#fff" stroke="#2a2a2a" stroke-width="2.2" paint-order="stroke">Kamieniec</text><rect x="1098" y="648.5" width="21.5" height="14" rx="3" fill="#f5d23a" stroke="#5a4a10" stroke-width="1"/><text x="1108.75" y="659.0" text-anchor="middle" font-family="Liberation Sans" font-size="10" font-weight="bold" fill="#222">244</text><rect x="1101" y="707.5" width="21.5" height="14" rx="3" fill="#f5d23a" stroke="#5a4a10" stroke-width="1"/><text x="1111.75" y="718.0" text-anchor="middle" font-family="Liberation Sans" font-size="10" font-weight="bold" fill="#222">244</text><rect x="1160" y="455" width="12" height="15" rx="3" fill="#f5d23a" stroke="#5a4a10" stroke-width="1"/></svg>
</div>
<div class="a" style="left:-28px;top:-43px;width:1207px;height:857px;pointer-events:none"><div class="a" style="left:636px;top:241px;width:256px;height:34px;border-radius:8px;background:rgba(255,255,255,.95);box-shadow:0 1px 3px rgba(0,0,0,.12)"></div><div class="a" style="left:640px;top:245px;width:45px;height:26px;border-radius:6px;background:#dcfce7;border:1px solid #86efac"></div><div class="a" style="left:649px;top:252.5px;font-size:11px;font-weight:bold;color:#15803d">NDVI</div><div class="a" style="left:694.9px;top:252.5px;font-size:11px;font-weight:bold;color:#4b5563">NDWI</div><div class="a" style="left:743px;top:252.5px;font-size:11px;font-weight:bold;color:#4b5563">EVI</div><div class="a" style="left:778.8px;top:252.5px;font-size:11px;font-weight:bold;color:#4b5563">NDRE</div><div class="a" style="left:828px;top:252.5px;font-size:11px;font-weight:bold;color:#4b5563">Więcej</div><svg style="left:868px;top:253px" width="10" height="10" viewBox="0 0 24 24" fill="none" stroke="#6b7280" stroke-width="2"><path d="m6 9 6 6 6-6"/></svg><div class="a" style="left:968px;top:285px;width:200px;height:251px;border-radius:8px;background:rgba(255,255,255,.965);box-shadow:0 2px 6px rgba(0,0,0,.15)"></div><svg style="left:980px;top:299px" width="14" height="14" viewBox="0 0 24 24" fill="none" stroke="#3b82f6" stroke-width="2" stroke-linecap="round"><path d="M3 3v16a2 2 0 0 0 2 2h16"/><path d="M18 17V9"/><path d="M13 17V5"/><path d="M8 17v-3"/></svg><div class="a" style="left:999.7px;top:299.8px;font-size:11.8px;font-weight:bold;color:#1f2937">Statystyki NDVI</div><div class="a" style="left:981px;top:323.9px;font-size:12px;color:#6b7280;letter-spacing:.3px">Min:</div><div class="a" style="right:52.799999999999955px;top:324.9px;font-family:'Liberation Mono',monospace;font-size:12px;color:#374151;">0.199</div><div class="a" style="left:981px;top:343.6px;font-size:12px;color:#6b7280;letter-spacing:.3px">Max:</div><div class="a" style="right:52.799999999999955px;top:344.6px;font-family:'Liberation Mono',monospace;font-size:12px;color:#374151;">0.478</div><div class="a" style="left:981px;top:363.7px;font-size:12px;color:#6b7280;letter-spacing:.3px">Średnia:</div><div class="a" style="right:52.799999999999955px;top:364.7px;font-family:'Liberation Mono',monospace;font-size:12px;color:#15803d;font-weight:bold">0.376</div><div class="a" style="left:981px;top:385.5px;width:173px;height:1px;background:#e5e7eb"></div><div class="a" style="left:997px;top:396.3px;font-size:12px;color:#6b7280;letter-spacing:.3px">Czyste px:</div><div class="a" style="right:52.799999999999955px;top:397.3px;font-family:'Liberation Mono',monospace;font-size:12px;color:#16a34a;font-weight:bold">100%</div><svg style="left:980px;top:399px" width="12" height="11" viewBox="1 6 18 17" fill="none" stroke="#4b5563" stroke-width="2" stroke-linecap="round" stroke-linejoin="round"><path d="M15.947 12.65a4 4 0 0 0-5.925-4.128"/><path d="M13 22H7a5 5 0 1 1 4.9-6H13a3 3 0 0 1 0 6Z"/></svg><div class="a" style="left:981px;top:416.3px;font-size:12px;color:#6b7280;letter-spacing:.3px">Chmury (scena):</div><div class="a" style="right:52.799999999999955px;top:417.3px;font-family:'Liberation Mono',monospace;font-size:12px;color:#6b7280;">2%</div><div class="a" style="left:981px;top:436.1px;font-size:12px;color:#6b7280;letter-spacing:.3px">Śr. CLP:</div><div class="a" style="right:52.799999999999955px;top:437.1px;font-family:'Liberation Mono',monospace;font-size:12px;color:#6b7280;">8%</div><div class="a" style="left:981px;top:456.0px;font-size:12px;color:#6b7280;letter-spacing:.3px">Data:</div><div class="a" style="right:52.799999999999955px;top:458.5px;font-family:'Liberation Mono',monospace;font-size:10px;color:#4b5563;">27.03.2026</div><div class="a" style="left:981px;top:479px;width:173px;height:1px;background:#e5e7eb"></div><div class="a" style="left:980.5px;top:489.4px;font-size:10.7px;color:#6b7280">vs Invalid Date (2d)</div><div class="a" style="left:980.5px;top:509.3px;font-family:'Liberation Mono',monospace;font-size:12px;font-weight:bold;color:#16a34a">NDVI +0.331 <span style="color:#ef4444">NDWI −0.425</span></div><div class="a" style="left:360px;top:740px;width:180px;height:62px;border-radius:8px;background:rgba(255,255,255,.95);box-shadow:0 1px 4px rgba(0,0,0,.15)"></div><div class="a" style="left:369px;top:750.9px;font-size:10.5px;font-weight:bold;color:#1f2937">NDVI — Wegetacja</div><div class="a" style="left:369px;top:768px;width:162px;height:8px;border-radius:4px;background:linear-gradient(90deg,#e0392a,#f0842e 25%,#f6d13d 50%,#a7c447 72%,#2e9a40)"></div><div class="a" style="left:369px;top:779.4px;font-size:10.5px;color:#6b7280">Gleba / woda</div><div class="a" style="right:676.5px;top:779.4px;font-size:10.5px;color:#6b7280">Roślinność</div><div class="a" style="left:1037px;top:797px;width:143px;height:16px;background:rgba(255,255,255,.85)"></div><div class="a" style="left:1043px;top:800px;width:12px;height:4px;background:#4c7be1"></div><div class="a" style="left:1043px;top:804px;width:12px;height:4px;background:#ffd500"></div><div class="a" style="left:1057px;top:799px;font-size:12px;color:#333"><span style="color:#0078a8">Leaflet</span> | Google Maps</div></div>
</div>
</body></html>
